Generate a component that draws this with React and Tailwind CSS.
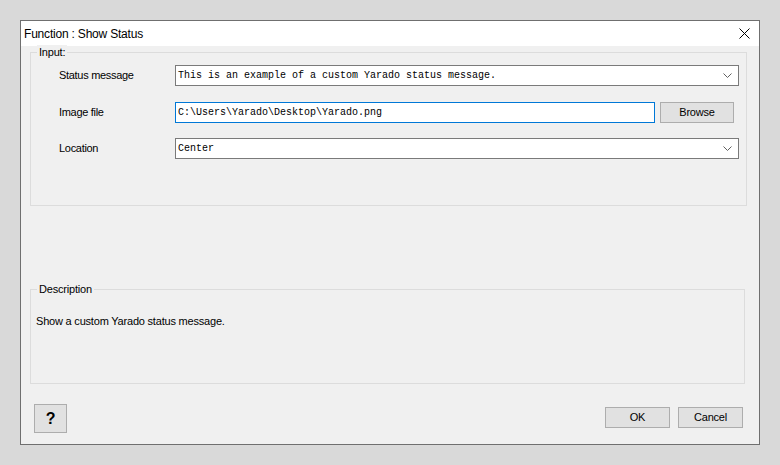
const sans = { fontFamily: '"Liberation Sans", Arial, sans-serif' };

const Chevron = () => (
  <svg width="9" height="5" viewBox="0 0 9 5" className="shrink-0">
    <polyline points="0.5,0.5 4.5,4.5 8.5,0.5" fill="none" stroke="#606060" strokeWidth="1" />
  </svg>
);

const Combo = ({ value }) => (
  <div className="flex h-[21px] w-[564px] items-center justify-between border border-[#7a7a7a] bg-white pl-[2px] pr-[6px]">
    <span className="font-['Liberation_Mono',monospace] text-[10px] leading-none text-black">{value}</span>
    <Chevron />
  </div>
);

const WinButton = ({ children, className = "" }) => (
  <button
    className={`flex items-center justify-center border border-[#adadad] bg-[#e1e1e1] text-[11px] tracking-[-0.2px] text-black ${className}`}
  >
    {children}
  </button>
);

export default function App() {
  return (
    <div className="h-[465px] w-[780px] bg-[#d9d9d9] pl-[20px] pt-[20px]" style={sans}>
      <div className="flex h-[425px] w-[740px] flex-col border border-[#6f6f6f] bg-[#f0f0f0]">
        {/* Title bar */}
        <div className="flex h-[25px] items-center justify-between bg-white pl-[3px] pr-[9px]">
          <span className="text-[12px] tracking-[-0.2px] text-black">Function : Show Status</span>
          <svg width="11" height="11" viewBox="0 0 11 11">
            <path d="M0.5 0.5L10.5 10.5M10.5 0.5L0.5 10.5" stroke="#000" strokeWidth="1" />
          </svg>
        </div>

        {/* Body */}
        <div className="flex flex-1 flex-col pl-[9px]">
          {/* Input group */}
          <div className="relative mt-[6px] h-[154px] w-[717px] border border-[#dcdcdc] pl-[28px] pr-[6px] pt-[12px]">
            <span className="absolute -top-[8px] left-[6px] bg-[#f0f0f0] px-[2px] text-[11px] leading-[14px] tracking-[-0.2px] text-black">
              Input:
            </span>
            <div className="flex h-[21px] items-center">
              <span className="w-[116px] text-[11px] tracking-[-0.3px] text-black">Status message</span>
              <Combo value="This is an example of a custom Yarado status message." />
            </div>
            <div className="mt-[16px] flex h-[21px] items-center">
              <span className="w-[116px] text-[11px] tracking-[-0.3px] text-black">Image file</span>
              <div className="flex h-[21px] w-[480px] items-center border border-[#0078d7] bg-white pl-[2px]">
                <span className="font-['Liberation_Mono',monospace] text-[10px] leading-none text-black">
                  C:\Users\Yarado\Desktop\Yarado.png
                </span>
              </div>
              <WinButton className="ml-[5px] h-[21px] w-[74px]">Browse</WinButton>
            </div>
            <div className="mt-[15px] flex h-[21px] items-center">
              <span className="w-[116px] text-[11px] tracking-[-0.3px] text-black">Location</span>
              <Combo value="Center" />
            </div>
          </div>

          {/* Description group */}
          <div className="relative mt-[83px] h-[95px] w-[715px] border border-[#dcdcdc] pl-[5px] pt-[24px]">
            <span className="absolute -top-[8px] left-[6px] bg-[#f0f0f0] px-[2px] text-[11px] leading-[14px] tracking-[-0.2px] text-black">
              Description
            </span>
            <p className="text-[11px] leading-[14px] tracking-[-0.2px] text-black">Show a custom Yarado status message.</p>
          </div>

          {/* Bottom buttons */}
          <div className="mt-[20px] flex w-[713px] items-start justify-between pl-[4px]">
            <WinButton className="h-[29px] w-[33px] !text-[16px] font-bold">?</WinButton>
            <div className="mt-[3px] flex gap-[8px]">
              <WinButton className="h-[21px] w-[65px]">OK</WinButton>
              <WinButton className="h-[21px] w-[65px]">Cancel</WinButton>
            </div>
          </div>
        </div>
      </div>
    </div>
  );
}
